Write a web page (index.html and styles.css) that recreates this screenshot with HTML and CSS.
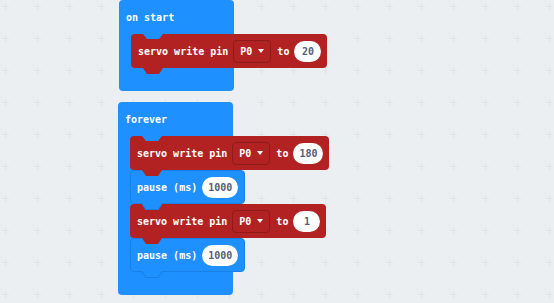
FILE: index.html
```html
<!DOCTYPE html>
<html>
<head>
    <title>Servo blocks</title>
    <link rel="stylesheet" href="styles.css">
</head>
<body>
    <div id="workspace">
        <svg class="grid" width="554" height="303">
            <defs>
                <pattern id="cross" width="32" height="32" patternUnits="userSpaceOnUse">
                    <path d="M2 6.5h7M5.5 3v7" stroke="#e0e4e6" stroke-width="1"/>
                </pattern>
            </defs>
            <rect width="554" height="303" fill="url(#cross)"/>
        </svg>

        <!-- on start -->
        <div class="hat on-start">
            <div class="hat-label">on start</div>
            <div class="stack">
                <div class="stmt pins">
                    <span class="label">servo write pin</span>
                    <span class="dropdown"><span>P0</span><svg width="6" height="4" viewBox="0 0 6 4"><path d="M0 0h6L3 4z" fill="#fff"/></svg></span>
                    <span class="label">to</span>
                    <span class="num">20</span>
                </div>
            </div>
            <div class="hat-foot"></div>
        </div>

        <!-- forever -->
        <div class="hat forever">
            <div class="hat-label">forever</div>
            <div class="stack">
                <div class="stmt pins">
                    <span class="label">servo write pin</span>
                    <span class="dropdown"><span>P0</span><svg width="6" height="4" viewBox="0 0 6 4"><path d="M0 0h6L3 4z" fill="#fff"/></svg></span>
                    <span class="label">to</span>
                    <span class="num">180</span>
                </div>
                <div class="stmt basic">
                    <span class="label">pause (ms)</span>
                    <span class="num">1000</span>
                </div>
                <div class="stmt pins">
                    <span class="label">servo write pin</span>
                    <span class="dropdown"><span>P0</span><svg width="6" height="4" viewBox="0 0 6 4"><path d="M0 0h6L3 4z" fill="#fff"/></svg></span>
                    <span class="label">to</span>
                    <span class="num">1</span>
                </div>
                <div class="stmt basic">
                    <span class="label">pause (ms)</span>
                    <span class="num">1000</span>
                </div>
            </div>
            <div class="hat-foot"></div>
        </div>
    </div>
</body>
</html>
```

FILE: styles.css
```css
body {
    margin: 0;
    background-color: #eceff1;
    font-family: "DejaVu Sans Mono", "Liberation Mono", monospace;
    font-size: 10px;
    font-weight: bold;
    color: #fff;
}
#workspace {
    position: relative;
    width: 554px;
    height: 303px;
    overflow: hidden;
}
.grid {
    position: absolute;
    left: 0;
    top: 0;
}

/* hat blocks sit on the free canvas */
.hat {
    position: absolute;
    width: 115px;
    background-color: #1e90ff;
    border-radius: 4px;
}
.on-start {
    left: 119px;
    top: 0;
}
.forever {
    left: 118px;
    top: 102px;
}
.hat-label {
    position: relative;
    height: 34px;
    display: flex;
    align-items: center;
    padding-left: 7px;
}
.hat-label::after {
    content: "";
    position: absolute;
    left: 24px;
    top: 100%;
    width: 20px;
    height: 5px;
    background-color: #1e90ff;
    clip-path: polygon(0 0, 100% 0, 80% 100%, 20% 100%);
    z-index: 2;
}
.stack {
    margin-left: 12px;
    display: flex;
    flex-direction: column;
    align-items: flex-start;
}
.hat-foot {
    height: 23px;
}

/* statement blocks */
.stmt {
    position: relative;
    box-sizing: border-box;
    height: 34px;
    display: flex;
    align-items: center;
    gap: 5px;
    padding: 0 6px 0 7px;
    border-radius: 4px;
    white-space: nowrap;
}
.stmt::after {
    content: "";
    position: absolute;
    left: 12px;
    top: 100%;
    width: 20px;
    height: 6px;
    clip-path: polygon(0 0, 100% 0, 80% 100%, 20% 100%);
    z-index: 2;
}
.pins {
    background-color: #b22222;
}
.pins::after {
    background-color: #b22222;
}
.basic {
    background-color: #1e90ff;
    border: 1px solid #1a80e6;
    padding-left: 6px;
    padding-right: 6px;
}
.basic::before {
    content: "";
    position: absolute;
    left: 10px;
    top: 100%;
    width: 22px;
    height: 7px;
    background-color: #1a80e6;
    clip-path: polygon(0 0, 100% 0, 80% 100%, 20% 100%);
    z-index: 2;
}
.basic::after {
    left: 11px;
    background-color: #1e90ff;
}

.dropdown {
    box-sizing: border-box;
    height: 23px;
    display: flex;
    align-items: center;
    gap: 6px;
    padding: 0 6px;
    border: 1px solid #8c1b1b;
    border-radius: 4px;
    margin-right: 1px;
}
.num {
    box-sizing: border-box;
    min-width: 27px;
    height: 21px;
    padding: 0 6px;
    border-radius: 11px;
    background-color: #fff;
    color: #575e75;
    display: flex;
    align-items: center;
    justify-content: center;
}
```
